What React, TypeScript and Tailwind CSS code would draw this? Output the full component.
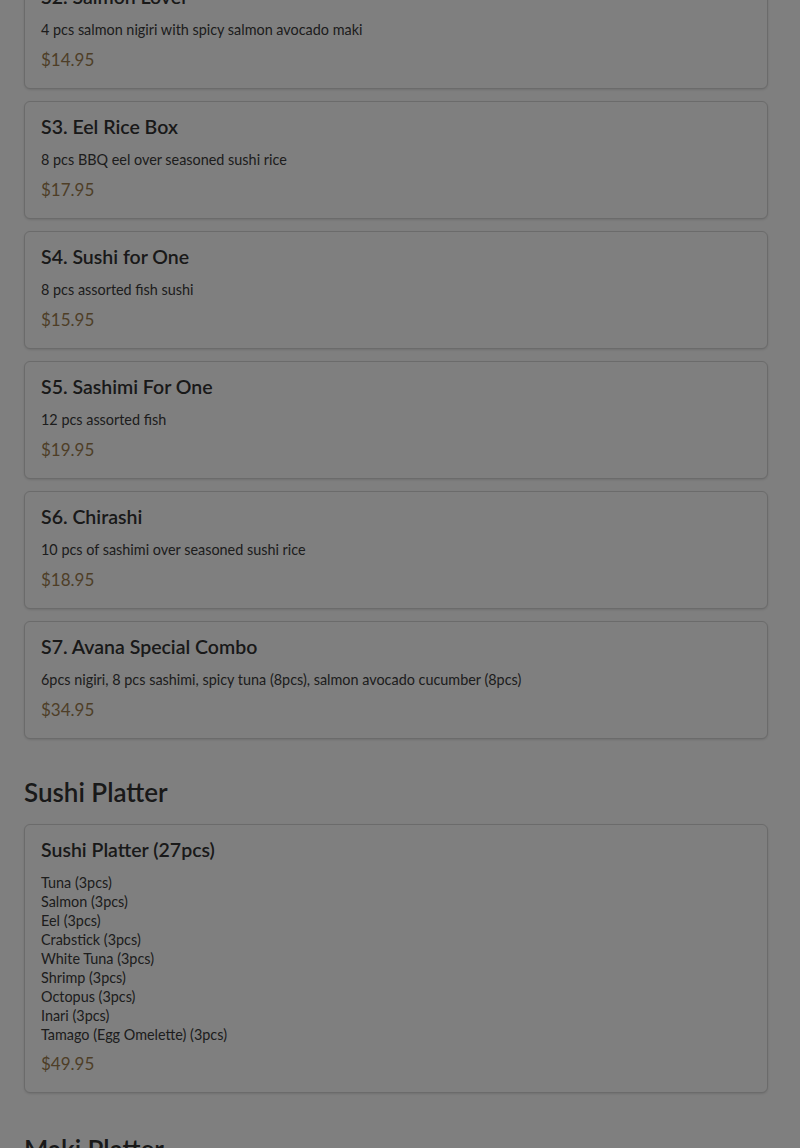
import React from 'react';

interface MenuItem {
    name: string;
    desc?: string;
    lines?: string[];
    price: string;
}

const boxes: MenuItem[] = [
    { name: 'S2. Salmon Lover', desc: '4 pcs salmon nigiri with spicy salmon avocado maki', price: '$14.95' },
    { name: 'S3. Eel Rice Box', desc: '8 pcs BBQ eel over seasoned sushi rice', price: '$17.95' },
    { name: 'S4. Sushi for One', desc: '8 pcs assorted fish sushi', price: '$15.95' },
    { name: 'S5. Sashimi For One', desc: '12 pcs assorted fish', price: '$19.95' },
    { name: 'S6. Chirashi', desc: '10 pcs of sashimi over seasoned sushi rice', price: '$18.95' },
    { name: 'S7. Avana Special Combo', desc: '6pcs nigiri, 8 pcs sashimi, spicy tuna (8pcs), salmon avocado cucumber (8pcs)', price: '$34.95' },
];

const platter: MenuItem = {
    name: 'Sushi Platter (27pcs)',
    lines: [
        'Tuna (3pcs)',
        'Salmon (3pcs)',
        'Eel (3pcs)',
        'Crabstick (3pcs)',
        'White Tuna (3pcs)',
        'Shrimp (3pcs)',
        'Octopus (3pcs)',
        'Inari (3pcs)',
        'Tamago (Egg Omelette) (3pcs)',
    ],
    price: '$49.95',
};

const Card: React.FC<{ item: MenuItem }> = ({ item }) => (
    <div className="bg-white border border-[#d6d6d6] rounded-md shadow-sm px-4 pt-[13px] pb-4">
        <h3 className="text-[19.5px] leading-6 font-semibold text-[#333]">{item.name}</h3>
        {item.desc && <p className="mt-[11px] text-[14.4px] leading-5 text-[#3a3a3a]">{item.desc}</p>}
        {item.lines && (
            <div className="mt-[11px] text-[14.4px] leading-[19px] text-[#3a3a3a]">
                {item.lines.map((l) => <div key={l}>{l}</div>)}
            </div>
        )}
        <div className="mt-2 text-[17px] leading-6 text-[#9c7c4e]">{item.price}</div>
    </div>
);

export default function App() {
    return (
        <div className="min-h-screen bg-white overflow-hidden" style={{ fontFamily: 'Lato, "Open Sans", sans-serif' }}>
            <div className="pl-6 pr-8 -mt-[29px] flex flex-col">
                <div className="flex flex-col gap-[12px]">
                    {boxes.map((b) => <Card key={b.name} item={b} />)}
                </div>
                <h2 className="mt-[37px] mb-4 text-[26px] leading-8 font-semibold text-[#333]">Sushi Platter</h2>
                <Card item={platter} />
                <h2 className="mt-10 mb-4 text-[26px] leading-8 font-semibold text-[#333]">Maki Platter</h2>
                <div className="h-40" />
            </div>
            <div className="fixed inset-0 bg-black/50" />
        </div>
    );
}
